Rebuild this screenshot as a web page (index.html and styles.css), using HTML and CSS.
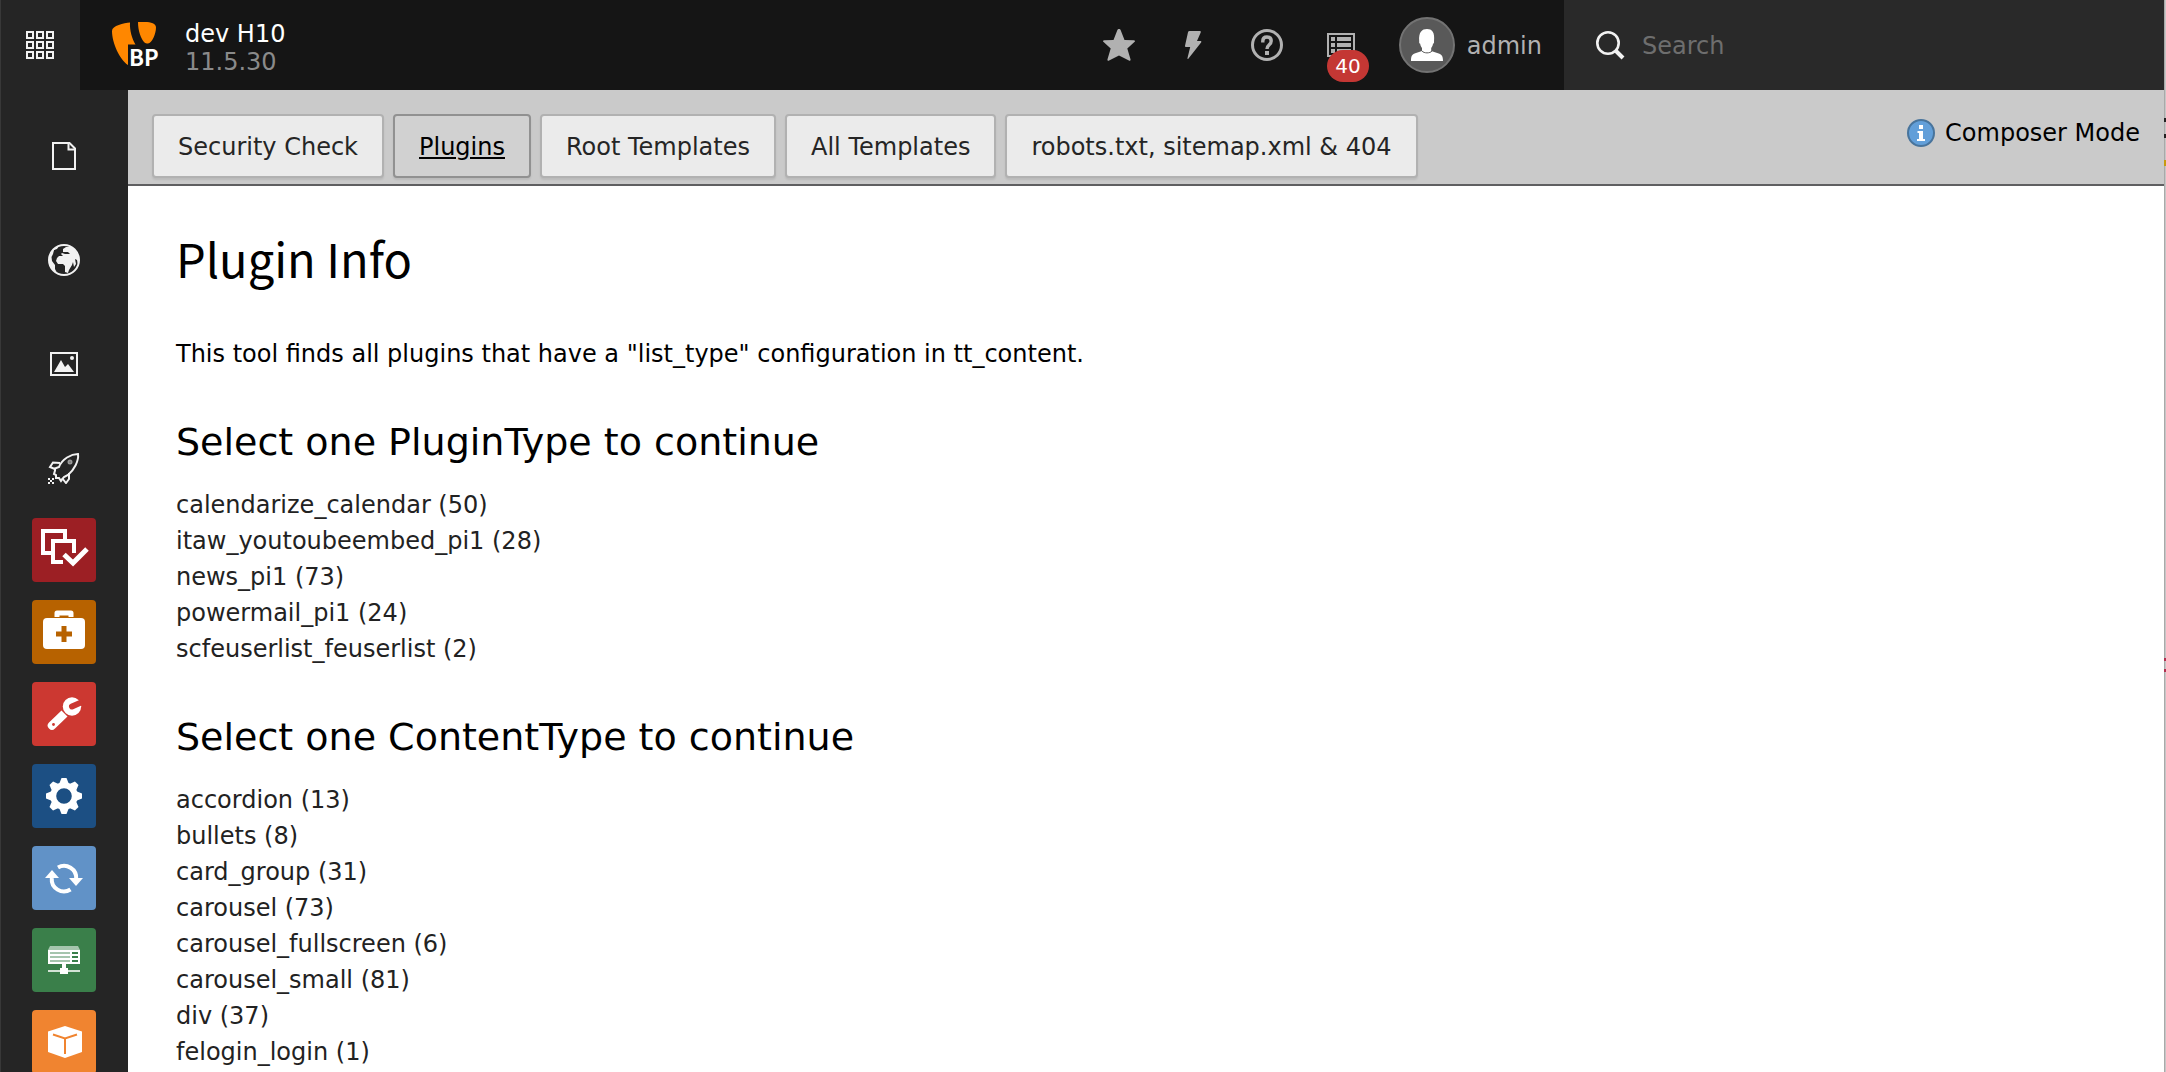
FILE: index.html
```html
<!DOCTYPE html>
<html lang="en">
<head>
<meta charset="utf-8">
<title>Plugin Info</title>
<link rel="stylesheet" href="styles.css">
</head>
<body>
<div class="app">
  <header class="topbar">
    <button class="menu-toggle" type="button" aria-label="Toggle module menu">
      <svg class="icon" viewBox="0 0 32 32" fill="none" stroke="#f2f2f2" stroke-width="2"><path d="M3 3h6v6H3zM13 3h6v6h-6zM23 3h6v6h-6zM3 13h6v6H3zM13 13h6v6h-6zM23 13h6v6h-6zM3 23h6v6H3zM13 23h6v6h-6zM23 23h6v6h-6z"/></svg>
    </button>
    <a class="brand" href="#">
      <svg class="brand-logo" viewBox="0 0 48 48"><g fill="#ff8700"><path d="M18 1.500C12 2 0 4.500 0 10c0 12 8 29 16 34V23.500h7.500C20 18 17.500 9 18 1.500z"/><path d="M26 1c0 9 3 17 6.500 20.500.8.900 2 1 3.500 1 4 0 8-10 8-16 0-4-5-5.500-11-5.500z"/></g><text class="logo-text" x="17" y="45">BP</text></svg>
      <span class="brand-text"><span class="brand-name">dev H10</span><span class="brand-version">11.5.30</span></span>
    </a>
    <nav class="tools">
      <button class="tool" type="button" aria-label="Bookmarks"><svg class="icon" viewBox="0 0 32 32" fill="#b1b1b1"><path d="M16 0c1 0 1.500.6 1.800 1.400L21.500 11l9.300.3c1.300.1 1.500 1 .6 1.800L24.300 19.500l3.200 10.800c.3 1.300-.6 1.900-1.600 1.300L16 26.500l-9.900 5.100c-1 .6-1.900 0-1.600-1.300L7.700 19.500.6 13.100c-.9-.8-.7-1.700.6-1.800l9.300-.3 3.700-9.600C14.500.600 15 0 16 0z"/></svg></button>
      <button class="tool" type="button" aria-label="Clear cache"><svg class="icon" viewBox="0 0 32 32" fill="#b1b1b1"><path d="M12.500 2h10.300c.9 0 1.200.6.9 1.400L20 12h3.500c.9 0 1 .7.600 1.400L11.500 29.500c-.6.900-1.300.6-1-.5L13.200 18H8.800c-.8 0-1-.5-.8-1.200L11 3.200C11.200 2.400 11.700 2 12.500 2z"/></svg></button>
      <button class="tool" type="button" aria-label="Help"><svg class="icon" viewBox="0 0 32 32" fill="none" stroke="#b1b1b1"><circle cx="16" cy="16" r="14.500" stroke-width="3"/><path d="M11.800 13.500V12c0-2.500 1.700-4 4.200-4s4.200 1.500 4.200 4c0 4-4.200 3.500-4.200 8" stroke-width="3.400"/><path d="M14 22h4v4h-4z" fill="#b1b1b1" stroke="none"/></svg></button>
      <button class="tool" type="button" aria-label="System information"><svg class="icon" viewBox="0 0 32 32"><path d="M3 5h26v22H3z" fill="none" stroke="#b1b1b1" stroke-width="2"/><path d="M6 8h4v4H6zM12 8h14v4H12zM6 14h4v4H6zM12 14h14v4H12zM6 20h4v4H6zM12 20h14v4H12z" fill="#b1b1b1"/></svg><span class="badge">40</span></button>
      <button class="user" type="button"><svg class="avatar" viewBox="0 0 56 56"><circle cx="28" cy="28" r="27" fill="#595959" stroke="#737373" stroke-width="2"/><path d="M12 44c0-5 1-7 5-8l6-2v-3c-1-1-1.600-2.500-1.800-4.200-.9-.3-1.200-1.300-1-2.600C19.500 15 23 12 28 12s8 3 7 12.200c.2 1.300-.1 2.300-1 2.600-.2 1.700-.8 3.200-1.800 4.200v3l6 2c4.500 1 5.800 3 5.800 8z" fill="#fff"/><path d="M23 34c2 2.500 8 2.500 10 0" fill="none" stroke="#595959" stroke-width="1"/></svg><span>admin</span></button>
    </nav>
    <label class="search">
      <svg class="icon" viewBox="0 0 32 32" fill="none" stroke="#f2f2f2"><circle cx="14" cy="14" r="10.700" stroke-width="2.600"/><path d="M21.500 21.500l7.500 7.500" stroke-width="4"/></svg>
      <input class="search-input" type="search" placeholder="Search" aria-label="Search">
    </label>
  </header>

  <nav class="modules">
    <div class="module-groups">
      <a class="module" href="#" aria-label="Page"><svg class="icon" viewBox="0 0 32 32" fill="none" stroke="#f2f2f2" stroke-width="2"><path d="M5 3h16.500L27 8.500V29H5z"/><path d="M20.500 3v6.500H27"/></svg></a>
      <a class="module" href="#" aria-label="Site"><svg class="icon" viewBox="0 0 32 32"><circle cx="16" cy="16" r="15" fill="none" stroke="#f2f2f2" stroke-width="2"/><path d="M2 10C4 5 8 3 11 2L9 5 6 6 5 10 3.500 13 4 17l3 4v4l2 4C4 26 1 21 1 16zM15 5l3-2h6l3 3 3 5 1 5-1 5-1-5-2-1 1 5-2 3-1-5-1 3-3 5-1 3-3-1v-6l-2-2h-5l-2-3 1-3 2-2 4 0-2-2 1-1 3 1h5l-2-2h-5z" fill="#f2f2f2"/></svg></a>
      <a class="module" href="#" aria-label="File"><svg class="icon" viewBox="0 0 32 32"><path d="M3 5h26v22H3z" fill="none" stroke="#f2f2f2" stroke-width="2"/><path d="M6 24l7-12 4 7 3-3 6 8z" fill="#f2f2f2"/><circle cx="24" cy="10" r="2" fill="#f2f2f2"/></svg></a>
      <a class="module" href="#" aria-label="Install"><svg class="icon" viewBox="0 0 32 32" fill="none" stroke="#f2f2f2" stroke-width="2"><path d="M30 2c-7 0-16 5-19 13l-4 1.500v2L6 22l2 1v3l3 0 2 3 3-4 4-2c6-5 11-14 10-21z"/><path d="M12 11L5 10.500 2 15l6 2.500M21 21v6l-3 4-4-5"/><circle cx="22" cy="10" r="1.500" stroke="#999"/><path d="M0 26h2v2H0zM4 26h2v2H4zM2 28h2v2H2zM0 30h2v2H0zM4 30h2v2H4z" fill="#f2f2f2" stroke="none"/></svg></a>
    </div>
    <div class="module-tiles">
      <a class="tile tile-workspace" href="#" aria-label="Workspaces"><svg viewBox="0 0 64 64" fill="none" stroke="#fff" stroke-width="4"><path d="M20 35h-9V13h22v8"/><path d="M31 44H21V23h21v12"/><path d="M32 36.500l9 8.500 14-14" stroke-width="5"/></svg></a>
      <a class="tile tile-maintenance" href="#" aria-label="Maintenance"><svg viewBox="0 0 64 64"><path d="M25 17v-4h14v4" fill="none" stroke="#fff" stroke-width="5" stroke-linejoin="round"/><rect x="11" y="18" width="42" height="31" rx="4" fill="#fff"/><path d="M29.500 26h5v5.500H40v5h-5.500V42h-5v-5.500H24v-5h5.500z" fill="#b76200"/></svg></a>
      <a class="tile tile-settings" href="#" aria-label="Settings"><svg viewBox="0 0 64 64"><path d="M29.500 28.500l6 6-12.500 12c-2 2-4 2-6 0s-2-4 0-6z" fill="#fff"/><circle cx="40" cy="24.500" r="9.200" fill="#fff"/><path d="M40 21.500h12v6H40a3 3 0 0 1 0-6z" fill="#cc3831" transform="rotate(-24 40 24.500)"/><circle cx="21.500" cy="42.500" r="1.400" fill="#cc3831"/></svg></a>
      <a class="tile tile-upgrade" href="#" aria-label="Upgrade"><svg viewBox="0 0 64 64"><circle cx="32" cy="32" r="10.800" fill="none" stroke="#fff" stroke-width="6"/><g fill="#fff"><path id="tooth" d="M27.500 19l2-5h5l2 5z"/><use href="#tooth" transform="rotate(45 32 32)"/><use href="#tooth" transform="rotate(90 32 32)"/><use href="#tooth" transform="rotate(135 32 32)"/><use href="#tooth" transform="rotate(180 32 32)"/><use href="#tooth" transform="rotate(225 32 32)"/><use href="#tooth" transform="rotate(270 32 32)"/><use href="#tooth" transform="rotate(315 32 32)"/></g></svg></a>
      <a class="tile tile-reload" href="#" aria-label="Reload"><svg viewBox="0 0 64 64"><path d="M26 21.500A12.200 12.200 0 0 1 44.200 33M38.500 43.500A12.200 12.200 0 0 1 19.800 32" fill="none" stroke="#fff" stroke-width="4"/><path d="M13 32l7-8 7 8zM37 32h14l-7 8z" fill="#fff"/></svg></a>
      <a class="tile tile-environment" href="#" aria-label="Environment"><svg viewBox="0 0 64 64"><path d="M18 18h28l2 4H16z" fill="#a5c5ad"/><path d="M16 22h32v14H16zM30 36h4v4h2v6h-8v-6h2z" fill="#fff"/><path d="M18 24h20v2H18zM18 28h20v2H18zM18 32h20v2H18z" fill="#a5c5ad"/><path d="M40 24h6v2h-6zM40 28h6v2h-6zM40 32h6v2h-6z" fill="#3a7f4a"/><path d="M16 42h12v2H16zM36 42h12v2H36z" fill="#d3e3d6"/></svg></a>
      <a class="tile tile-extensions" href="#" aria-label="Extensions"><svg viewBox="0 0 64 64"><path d="M33 16l17 5.500v20.500L33 48l-17-6V21.500z" fill="#fff"/><path d="M21 24.500L33 28.500l12-4M33 28.500V44" fill="none" stroke="#f08430" stroke-width="2"/></svg></a>
    </div>
  </nav>

  <main class="content">
    <div class="docheader">
      <nav class="tabs">
        <a class="tab" href="#">Security Check</a>
        <a class="tab tab-active" href="#" aria-current="page">Plugins</a>
        <a class="tab" href="#">Root Templates</a>
        <a class="tab" href="#">All Templates</a>
        <a class="tab" href="#">robots.txt, sitemap.xml &amp; 404</a>
      </nav>
      <p class="mode"><svg class="mode-icon" viewBox="0 0 28 28"><circle cx="14" cy="14" r="13" fill="#629fd9" stroke="#48749c" stroke-width="2"/><path d="M12 6h4v4h-4zM10.500 12H16v8h2v2h-8v-2h2v-6h-1.500z" fill="#fff"/></svg>Composer Mode</p>
    </div>
    <div class="module-body">
      <h1>Plugin Info</h1>
      <p class="intro">This tool finds all plugins that have a "list_type" configuration in tt_content.</p>
      <section>
        <h2>Select one PluginType to continue</h2>
        <ul class="types">
          <li><a href="#">calendarize_calendar (50)</a></li>
          <li><a href="#">itaw_youtoubeembed_pi1 (28)</a></li>
          <li><a href="#">news_pi1 (73)</a></li>
          <li><a href="#">powermail_pi1 (24)</a></li>
          <li><a href="#">scfeuserlist_feuserlist (2)</a></li>
        </ul>
      </section>
      <section>
        <h2>Select one ContentType to continue</h2>
        <ul class="types">
          <li><a href="#">accordion (13)</a></li>
          <li><a href="#">bullets (8)</a></li>
          <li><a href="#">card_group (31)</a></li>
          <li><a href="#">carousel (73)</a></li>
          <li><a href="#">carousel_fullscreen (6)</a></li>
          <li><a href="#">carousel_small (81)</a></li>
          <li><a href="#">div (37)</a></li>
          <li><a href="#">felogin_login (1)</a></li>
        </ul>
      </section>
    </div>
  </main>
</div>
</body>
</html>
```
FILE: styles.css
```css
* {
  box-sizing: border-box;
}

body {
  margin: 0;
  font: 24px/36px Verdana, "DejaVu Sans", sans-serif;
  color: #000;
  background:
    linear-gradient(#222, #222) right 118px / 2px 4px no-repeat,
    linear-gradient(#222, #222) right 134px / 2px 4px no-repeat,
    linear-gradient(#c79a10, #c79a10) right 160px / 2px 6px no-repeat,
    linear-gradient(#b03050, #b03050) right 658px / 2px 3px no-repeat,
    linear-gradient(#b03050, #b03050) right 669px / 2px 3px no-repeat,
    linear-gradient(to left, #c6c6c6 1px, #a9a9a9 1px);
}

a {
  color: inherit;
  text-decoration: none;
}

button {
  padding: 0;
  border: 0;
  background: none;
  font: inherit;
  color: inherit;
}

svg {
  display: block;
  flex: none;
}

h1,
h2,
p,
ul {
  margin: 0;
  padding: 0;
  font-weight: 400;
}

.app {
  display: grid;
  grid-template: 90px 1fr / 128px 1fr;
  height: 100vh;
  overflow: hidden;
  margin-right: 2px;
}

.icon {
  width: 32px;
  height: 32px;
}

/* Top bar */
.topbar {
  grid-column: 1 / -1;
  display: flex;
  background: #151515;
  color: #b1b1b1;
}

.menu-toggle {
  display: flex;
  align-items: center;
  justify-content: center;
  width: 80px;
  background: #252525;
  box-shadow: inset 1px 0 #383838;
}

.brand {
  display: flex;
  align-items: center;
  gap: 25px;
  padding-left: 32px;
}

.brand-logo {
  width: 48px;
  height: 48px;
  overflow: visible;
}

.logo-text {
  font: bold 22px "Noto Sans CJK SC", sans-serif;
  fill: #fff;
}

.brand-text {
  display: flex;
  flex-direction: column;
  padding-top: 5px;
  line-height: 28px;
}

.brand-name {
  color: #fff;
}

.brand-version {
  color: #8a8a8a;
}

.tools {
  display: flex;
  margin-left: auto;
}

.tool {
  position: relative;
  padding: 0 21px;
}

.badge {
  position: absolute;
  top: 50px;
  right: 9px;
  padding: 0 8px;
  border-radius: 16px;
  background: #c43734;
  color: #fff;
  font-size: 20px;
  line-height: 32px;
}

.user {
  display: flex;
  align-items: center;
  gap: 12px;
  padding: 0 22px 0 21px;
}

.user span {
  padding-top: 2px;
}

.avatar {
  width: 56px;
  height: 56px;
}

.search {
  display: flex;
  align-items: center;
  gap: 16px;
  width: 600px;
  padding: 0 30px;
  background: #292929;
}

.search-input {
  flex: 1;
  min-width: 0;
  padding: 2px 0 0;
  border: 0;
  background: none;
  font: inherit;
  color: #fff;
}

.search-input::placeholder {
  color: #6e6e6e;
  opacity: 1;
}

/* Module menu */
.modules {
  overflow: hidden;
  box-shadow: inset 1px 0 #383838;
  background: #252525;
}

.module-groups,
.module-tiles {
  display: flex;
  flex-direction: column;
  align-items: center;
}

.module-groups {
  gap: 72px;
  padding: 50px 0 34px;
}

.module-tiles {
  gap: 18px;
}

.tile {
  width: 64px;
  height: 64px;
  border-radius: 4px;
  overflow: hidden;
}

.tile-workspace { background: #9c1f24; }
.tile-maintenance { background: #b76200; }
.tile-settings { background: #cc3831; }
.tile-upgrade { background: #1c4f83; }
.tile-reload { background: #6192c7; }
.tile-environment { background: #3a7f4a; }
.tile-extensions { background: #f08430; }

/* Content */
.content {
  overflow: hidden;
  background: #fff;
}

.docheader {
  display: flex;
  align-items: flex-start;
  justify-content: space-between;
  padding: 24px 24px 6px;
  border-bottom: 2px solid #5f5f61;
  background: #cacaca;
}

.tabs {
  display: flex;
  gap: 9px;
}

.tab {
  padding: 13px 24px 11px;
  border: 2px solid #b1b1b1;
  border-radius: 4px;
  background: #ebebeb;
  box-shadow: 0 2px 2px rgba(0, 0, 0, 0.08);
  color: #252525;
}

.tab-active {
  border-color: #919191;
  background: #d1d1d1;
  color: #000;
  text-decoration: underline;
}

.mode {
  display: flex;
  align-items: center;
  gap: 10px;
  padding-top: 1px;
}

.mode-icon {
  width: 28px;
  height: 28px;
}

.module-body {
  padding: 42px 48px;
}

h1 {
  margin-bottom: 48px;
  font: 47px/60px "Noto Sans CJK SC", sans-serif;
}

.intro {
  margin-bottom: 46px;
}

h2 {
  margin-bottom: 21px;
  font-size: 38px;
  line-height: 48px;
}

.types {
  margin-bottom: 46px;
  list-style: none;
  color: #222;
}
```
